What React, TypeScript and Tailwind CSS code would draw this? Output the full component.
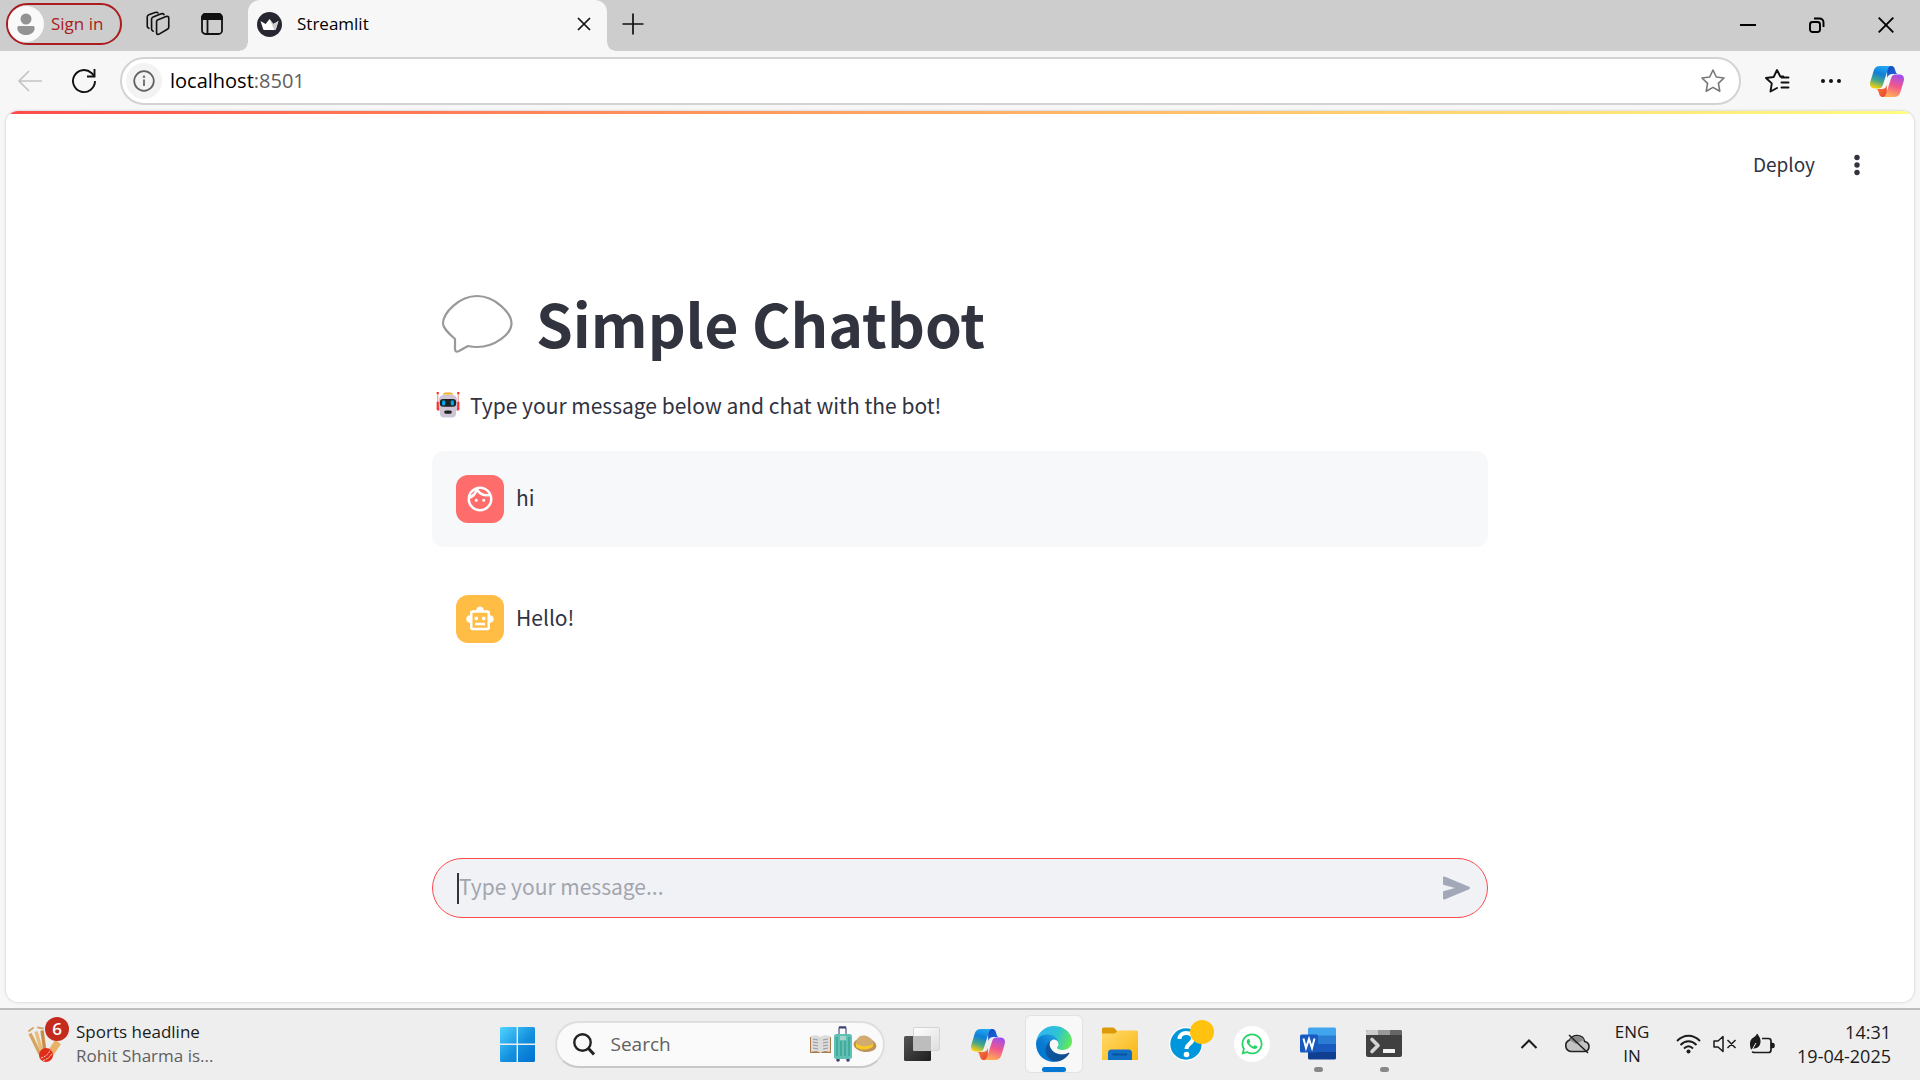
import { useId, type ReactNode } from "react";
import { FaWhatsapp } from "react-icons/fa";
import { MdOutlineFace, MdOutlineSmartToy } from "react-icons/md";

const ui = "font-['Open_Sans',sans-serif]";
const app = "font-['Noto_Sans_CJK_SC','Noto_Sans',sans-serif]";

function CopilotLogo() {
  const id = useId();
  return (
    <svg width="34" height="31" viewBox="0 0 34 31" aria-hidden="true">
      <defs>
        <linearGradient id={id + "a"} x1="0.6" y1="0" x2="0.3" y2="1">
          <stop offset="0" stopColor="#22a7f2" />
          <stop offset="0.35" stopColor="#0f7fd8" />
          <stop offset="0.68" stopColor="#4aa883" />
          <stop offset="1" stopColor="#fdd10a" />
        </linearGradient>
        <linearGradient id={id + "b"} x1="0.7" y1="0" x2="0.4" y2="1">
          <stop offset="0" stopColor="#a04df0" />
          <stop offset="0.5" stopColor="#f0588c" />
          <stop offset="1" stopColor="#ffad55" />
        </linearGradient>
        <linearGradient id={id + "c"} x1="0" y1="0" x2="1" y2="1">
          <stop offset="0" stopColor="#1546c0" />
          <stop offset="1" stopColor="#1c73e0" />
        </linearGradient>
        <linearGradient id={id + "d"} x1="0" y1="0" x2="1" y2="1">
          <stop offset="0" stopColor="#fb8a2c" />
          <stop offset="1" stopColor="#e73f3c" />
        </linearGradient>
      </defs>
      <path d="M17 0h4.5c2 0 2.8 1.4 3.3 3l1 3c.5 1.4 1.3 2 2.7 2h-6c-3 0-4.300 1-5.300 4z" fill={`url(#${id}c)`} />
      <path d="M17 31h-4.500c-2 0-2.800-1.400-3.300-3l-1-3c-.5-1.400-1.300-2-2.700-2h6c3 0 4.300-1 5.300-4z" fill={`url(#${id}d)`} />
      <path d="M10 0h11c-2.300.3-3 2.500-3.600 4.700L13 18.500C12 21.500 11 22.500 8.500 22.500H4.500C.5 22.500-.7 19.500.4 15.500L3.600 5C4.600 1.800 6.500 0 10 0z" fill={`url(#${id}a)`} />
      <path d="M24 31H13c2.300-.3 3-2.500 3.600-4.700L21 12.500c1-3 2-4 4.500-4h4c4 0 5.200 3 4.100 7L30.400 26c-1 3.200-2.900 5-6.400 5z" fill={`url(#${id}b)`} />
    </svg>
  );
}

function EdgeLogo() {
  return (
    <svg width="36" height="36" viewBox="0 0 256 256" aria-hidden="true">
      <defs>
        <linearGradient id="edge-a" x1="60" y1="177" x2="241" y2="177" gradientUnits="userSpaceOnUse">
          <stop offset="0" stopColor="#0c59a4" />
          <stop offset="1" stopColor="#114a8b" />
        </linearGradient>
        <linearGradient id="edge-b" x1="158" y1="100" x2="46" y2="222" gradientUnits="userSpaceOnUse">
          <stop offset="0" stopColor="#1b9de2" />
          <stop offset="0.6" stopColor="#0a78d0" />
          <stop offset="1" stopColor="#0078d4" />
        </linearGradient>
        <linearGradient id="edge-c" x1="20" y1="40" x2="250" y2="130" gradientUnits="userSpaceOnUse">
          <stop offset="0" stopColor="#30b6ee" />
          <stop offset="0.5" stopColor="#2cc3d5" />
          <stop offset="1" stopColor="#66eb50" />
        </linearGradient>
      </defs>
      <path fill="url(#edge-a)" d="M231 190.500c-3.400 1.800-6.900 3.400-10.500 4.700a101.500 101.500 0 0 1-35.700 6.400c-47 0-88-32.300-88-73.900a31.500 31.500 0 0 1 16.400-27.300c-42.600 1.800-53.500 46.100-53.500 72 0 73.500 67.800 80.900 82.300 80.900 7.900 0 19.700-2.300 26.800-4.500l1.300-.4a128.300 128.300 0 0 0 66.600-52.800 4 4 0 0 0-5.700-5.100z" />
      <path fill="url(#edge-b)" d="M105.700 241.600a79.200 79.200 0 0 1-22.700-21.300 80.700 80.700 0 0 1 29.500-120c3.200-1.500 8.500-4.200 15.600-4a32.400 32.400 0 0 1 25.700 12.900 31.900 31.900 0 0 1 6.400 18.700c0-.2 24.500-79.600-80-79.600-43.900 0-80 41.700-80 78.300a130.200 130.200 0 0 0 12.100 56A128.200 128.200 0 0 0 169 249.200a75.400 75.400 0 0 1-62.800-7.600h-.5z" />
      <path fill="url(#edge-c)" d="M152.300 148.900c-.8 1-3.300 2.500-3.300 5.700 0 2.600 1.700 5.100 4.700 7.200 14.400 10 41.500 8.700 41.600 8.700 10.700 0 21.100-2.900 30.300-8.300A61.400 61.400 0 0 0 256 109.300c.3-22.400-8-37.300-11.300-43.900C223.500 23.900 177.700 0 128 0A128 128 0 0 0 0 126.200c.5-36.500 36.800-66 80-66 3.500 0 23.500.3 42 10a72.600 72.600 0 0 1 30.900 29.300c6.100 10.600 7.200 24.100 7.200 29.500s-2.700 13.300-7.800 19.900z" />
    </svg>
  );
}

function TabStrip() {
  return (
    <div className={`flex h-[51px] shrink-0 bg-[#cdcdcd] text-black ${ui}`}>
      <button className="mt-[3px] ml-1.5 flex h-[42px] w-[116px] items-center gap-[7px] rounded-full border-2 border-[#ab1c20] text-[17px] text-[#ab1c20]">
        <svg width="36" height="36" viewBox="0 0 36 36" aria-hidden="true">
          <circle cx="18" cy="18" r="18" fill="#f9f9f9" />
          <circle cx="18" cy="13" r="5.500" fill="#939393" />
          <path d="M11 20h14a1.700 1.700 0 0 1 1.700 1.700C26.700 26 23 29 18 29s-8.700-3-8.700-7.300A1.700 1.700 0 0 1 11 20z" fill="#939393" />
        </svg>
        Sign in
      </button>
      <button aria-label="Workspaces" className="ml-6 flex h-12 w-6 items-center">
        <svg width="25" height="26" viewBox="0 0 25 26" fill="none" stroke="#111" strokeWidth="1.700" strokeLinejoin="round" strokeLinecap="round">
          <path d="M11 10.500c0-1 .6-1.500 1.500-1.900l8.500-3.300c1.500-.6 2.700 0 2.700 1.500v9.500c0 1-.5 1.700-1.500 2.200l-8.500 5c-1.500.8-2.700.2-2.700-1.500z" />
          <path d="M7.500 20.500c-1-.3-1.700-1-1.700-2.200V8c0-1 .6-1.800 1.600-2.200l7.800-3.300c1.500-.6 3-.3 3.600.7" />
          <path d="M3 17.500c-1-.4-1.700-1-1.700-2.200V5.500c0-1 .6-1.800 1.600-2.200L9.500 1c1.300-.4 2.500-.2 3 .5" />
        </svg>
      </button>
      <button aria-label="Tab actions" className="ml-[30px] flex h-12 w-6 items-center">
        <svg width="24" height="24" viewBox="0 0 24 24" fill="none" stroke="#111" strokeWidth="1.800">
          <rect x="2" y="2" width="20" height="20" rx="3.500" />
          <path d="M2 7V5.500A3.500 3.500 0 0 1 5.500 2h13A3.500 3.500 0 0 1 22 5.500V7z" fill="#111" />
          <path d="M7.500 8v14" />
        </svg>
      </button>
      <div className="ml-4 h-2 w-2 self-end bg-[radial-gradient(circle_at_0_0,#cdcdcd_7px,#f7f7f7_8px)]" />
      <div className="flex h-full w-[359px] items-center rounded-t-[12px] bg-[#f7f7f7] pr-4 pb-[3px] pl-[9px]">
        <svg width="25" height="25" viewBox="0 0 25 25" aria-hidden="true">
          <circle cx="12.500" cy="12.500" r="12.500" fill="#262730" />
          <path d="M3.500 9l5.200 3 3.800-5 3.800 5 5.200-3-2.500 7.700c-.3 1-.8 1.300-1.800 1.300H7.800c-1 0-1.500-.3-1.800-1.300z" fill="#fff" />
          <path d="M12.500 7l3.800 5 5.200-3-2.500 7.700c-.3 1-.8 1.300-1.800 1.300z" fill="#ccc" />
        </svg>
        <span className="ml-[15px] flex-1 text-[17px]">Streamlit</span>
        <button aria-label="Close tab">
          <svg width="14" height="14" viewBox="0 0 14 14" stroke="#111" strokeWidth="1.700">
            <path d="M1 1l12 12M13 1L1 13" />
          </svg>
        </button>
      </div>
      <div className="h-2 w-2 self-end bg-[radial-gradient(circle_at_100%_0,#cdcdcd_7px,#f7f7f7_8px)]" />
      <button aria-label="New tab" className="mb-1 ml-[7px]">
        <svg width="22" height="22" viewBox="0 0 22 22" stroke="#111" strokeWidth="1.700">
          <path d="M11 0.500v21M0.500 11h21" />
        </svg>
      </button>
      <div className="ml-auto flex items-center gap-[53px] pr-[26px] pb-px">
        <button aria-label="Minimize">
          <svg width="16" height="16" viewBox="0 0 16 16" stroke="#000" strokeWidth="2"><path d="M0 8h16" /></svg>
        </button>
        <button aria-label="Restore">
          <svg width="16" height="16" viewBox="0 0 16 16" fill="none" stroke="#000" strokeWidth="1.900">
            <rect x="1" y="5" width="10" height="10" rx="2.500" />
            <path d="M5 1.500h5.500c2.500 0 4 1.800 4 4V10" />
          </svg>
        </button>
        <button aria-label="Close window">
          <svg width="16" height="16" viewBox="0 0 16 16" stroke="#000" strokeWidth="1.900"><path d="M.7.7l14.600 14.600M15.300.7L.7 15.300" /></svg>
        </button>
      </div>
    </div>
  );
}

function Toolbar() {
  return (
    <div className={`flex h-[60px] shrink-0 items-center bg-[#f7f7f7] pr-4 pl-[17px] ${ui}`}>
      <button aria-label="Back" disabled>
        <svg width="26" height="24" viewBox="0 0 26 24" fill="none" stroke="#c4c4c4" strokeWidth="1.700"><path d="M25 12H2M12 2L2 12l10 10" /></svg>
      </button>
      <button aria-label="Refresh" className="ml-7">
        <svg width="26" height="26" viewBox="0 0 26 26" fill="none" stroke="#111" strokeWidth="1.900">
          <path d="M24 13A11 11 0 1 1 20.500 5L23.500 8" />
          <path d="M23.500 1v7.500H16" />
        </svg>
      </button>
      <div className="ml-[23px] flex h-12 flex-1 items-center rounded-full border-2 border-[#d3d3d3] bg-white pr-[13px] pl-1">
        <button aria-label="Site information" className="flex h-9 w-9 items-center justify-center rounded-full bg-[#f3f3f3]">
          <svg width="22" height="22" viewBox="0 0 22 22" fill="none" stroke="#606060" strokeWidth="1.700">
            <circle cx="11" cy="11" r="9.800" />
            <path d="M11 9.500V16" />
            <circle cx="11" cy="6.700" r=".4" />
          </svg>
        </button>
        <div className="ml-2 flex-1 text-[20px] text-black">
          localhost<span className="text-[#606060]">:8501</span>
        </div>
        <button aria-label="Add to favorites">
          <svg width="26" height="26" viewBox="0 0 26 26" fill="none" stroke="#777" strokeWidth="1.600" strokeLinejoin="round">
            <path d="M13 2l3.300 7 7.700 1-5.600 5.400 1.400 7.800L13 19.400l-6.800 3.800 1.400-7.800L2 10l7.700-1z" />
          </svg>
        </button>
      </div>
      <button aria-label="Favorites" className="ml-[23px]">
        <svg width="26" height="26" viewBox="0 0 26 26" fill="none" stroke="#111" strokeWidth="1.900" strokeLinejoin="round" strokeLinecap="round">
          <path d="M13 20l-6.500 3.500 1.300-8.100L2 10l7.700-1L13 2l3.300 6.500h3" />
          <path d="M17.500 9.500h7M17.500 14.500h7M17.500 19.500h7" />
        </svg>
      </button>
      <button aria-label="Settings and more" className="ml-[30px]">
        <svg width="22" height="6" viewBox="0 0 22 6" fill="#111"><circle cx="3" cy="3" r="2" /><circle cx="11" cy="3" r="2" /><circle cx="19" cy="3" r="2" /></svg>
      </button>
      <button aria-label="Copilot" className="ml-7"><CopilotLogo /></button>
    </div>
  );
}

function RobotEmoji() {
  return (
    <svg width="24" height="26" viewBox="2 1 22 24" aria-hidden="true">
      <path d="M3.500 3v10M22.500 3v10" stroke="#f8a0a0" strokeWidth="1.200" />
      <path d="M2.500 1h2v2h-2zM21.500 1h2v2h-2zM2.500 10h2.500v8H3.500a1 1 0 0 1-1-1zM21 10h2.500v7a1 1 0 0 1-1 1H21z" fill="#f8312f" />
      <path d="M10.500 1.500h5c1.200 0 2 .8 2 2H8.500c0-1.200.8-2 2-2z" fill="#ffb02e" />
      <path d="M4.500 9c0-3.500 2-5.500 5.500-5.500h6c3.500 0 5.500 2 5.500 5.500v6c0 1.500-.5 2.500-1 3.500v2c0 2.500-1.500 4-4 4h-7c-2.500 0-4-1.500-4-4v-2c-.5-1-1-2-1-3.500z" fill="#cdc4d6" />
      <rect x="5.500" y="7.500" width="15" height="7" rx="3" fill="#212121" />
      <rect x="7.500" y="8.500" width="3" height="5" rx="1.500" fill="#00a6ed" />
      <rect x="15.500" y="8.500" width="3" height="5" rx="1.500" fill="#00a6ed" />
      <rect x="9.500" y="18" width="7" height="3" rx="1.500" fill="#212121" />
    </svg>
  );
}

function Message({ shaded, color, icon, children }: { shaded?: boolean; color: string; icon: ReactNode; children: ReactNode }) {
  return (
    <article className={`flex items-center gap-3 rounded-[12px] p-6 ${shaded ? "bg-[#f7f8fa]" : ""}`}>
      <div className={`flex h-12 w-12 shrink-0 items-center justify-center rounded-[12px] text-white ${color}`}>{icon}</div>
      <p className="pb-1 text-[21px] leading-9">{children}</p>
    </article>
  );
}

function ChatPage() {
  return (
    <div className="flex flex-1 flex-col bg-[#f7f7f7] px-1.5 pb-1.5">
      <main className={`flex flex-1 flex-col overflow-hidden rounded-[12px] bg-white text-[#31333f] shadow-[0_0_2px_1px_#dddddd] ${app}`}>
        <div className="h-[3px] shrink-0 bg-linear-to-r from-[#ff4b4b] to-[#fffd80]" />
        <header className="flex h-[102px] shrink-0 items-center justify-end gap-[31px] pr-[46px]">
          <button className="pb-0.5 text-[19px]">Deploy</button>
          <button aria-label="Main menu">
            <svg width="22" height="22" viewBox="0 0 22 22" fill="#31333f"><circle cx="11" cy="3.500" r="2.700" /><circle cx="11" cy="11" r="2.700" /><circle cx="11" cy="18.500" r="2.700" /></svg>
          </button>
        </header>
        <div className="mx-auto flex w-full max-w-[1056px] flex-1 flex-col pt-[67px] pb-[84px]">
          <h1 className="flex items-center gap-[23px] pl-[9px] text-[59px] leading-[80px] font-bold">
            <svg width="72" height="60" viewBox="0 0 72 60" fill="none" stroke="#999" strokeWidth="2.200" strokeLinejoin="round" aria-hidden="true">
              <path d="M36 3C54 3 70.500 20 70.500 30.500S54 54 36 54q-5 0-9-1l-9 5c-3 1.300-4 .3-4-2V46C8 41 2 34 2 30.500 2 20 18 3 36 3z" />
            </svg>
            Simple Chatbot
          </h1>
          <p className="mt-6 flex items-center gap-[10px] pl-1 text-[21px] leading-9">
            <RobotEmoji />
            Type your message below and chat with the bot!
          </p>
          <section aria-label="Conversation" className="mt-7 flex flex-col gap-6">
            <Message shaded color="bg-[#ff6c6c]" icon={<MdOutlineFace size={30} />}>hi</Message>
            <Message color="bg-[#ffbd45]" icon={<MdOutlineSmartToy size={30} />}>Hello!</Message>
          </section>
          <form className="mt-auto flex h-[60px] items-center rounded-full border border-[#ff4b4b] bg-[#f0f2f6] pr-4 pl-6" onSubmit={(e) => e.preventDefault()}>
            <span className="h-[31px] w-[2px] bg-[#31333f]" />
            <input aria-label="Type your message" placeholder="Type your message..." className="h-10 flex-1 bg-transparent pb-1 text-[21px] leading-9 outline-none placeholder:text-[#a3a5ae]" />
            <button aria-label="Send message">
              <svg width="28" height="24" viewBox="0 0 28 24" fill="#a3a8b8"><path d="M0 1.700C0 .8.700.3 1.600.6l24.500 10.200c1.200.5 1.200 1.900 0 2.400L1.600 23.400c-.9.300-1.600-.2-1.600-1.100v-5.800c0-.8.300-1.200 1-1.400L12 12 1 9C.3 8.700 0 8.300 0 7.500z" /></svg>
            </button>
          </form>
        </div>
      </main>
    </div>
  );
}

function TaskButton({ label, active, running, children }: { label: string; active?: boolean; running?: boolean; children: ReactNode }) {
  return (
    <button
      aria-label={label}
      className={`relative mx-1 flex h-[58px] w-[58px] items-center justify-center rounded-[6px] border ${active ? "border-[#e2e2e2] bg-[#f8f8f8]" : "border-transparent"}`}
    >
      {children}
      {active && <span className="absolute bottom-0 left-4 h-[5px] w-6 rounded-full bg-[#0078d4]" />}
      {running && <span className="absolute bottom-0 left-6 h-[5px] w-[9px] rounded-full bg-[#888]" />}
    </button>
  );
}

function WindowsLogo() {
  return (
    <svg width="35" height="35" viewBox="0 0 35 35" aria-hidden="true">
      <defs>
        <linearGradient id="win" x1="0" y1="0" x2="35" y2="35" gradientUnits="userSpaceOnUse">
          <stop offset="0" stopColor="#4fd4ff" />
          <stop offset="0.55" stopColor="#1490df" />
          <stop offset="1" stopColor="#0070cf" />
        </linearGradient>
      </defs>
      <path d="M1.500 0H16.600V16.600H0V1.500A1.500 1.500 0 0 1 1.500 0zM18 0h15.500A1.500 1.500 0 0 1 35 1.500v15.100H18zM0 18h16.600v17H1.500A1.500 1.500 0 0 1 0 33.500zM18 18h17v15.500a1.500 1.500 0 0 1-1.500 1.500H18z" fill="url(#win)" />
    </svg>
  );
}

function CricketIcon() {
  return (
    <svg width="36" height="38" viewBox="0 0 36 38" aria-hidden="true">
      <path d="M1 6l4-3M10 2.500l5 1" stroke="#d4a869" strokeWidth="2" strokeLinecap="round" />
      <path d="M2 8.500L12 29" stroke="#d9a45e" strokeWidth="3.400" />
      <path d="M8 6.500L14 27" stroke="#e9bc7c" strokeWidth="3.400" />
      <path d="M14 5.500L17 27" stroke="#c98d48" strokeWidth="3.400" />
      <path d="M30 17L20 32" stroke="#e7b267" strokeWidth="7" />
      <circle cx="18" cy="30" r="7" fill="#e02d1b" />
      <path d="M13 33c4-1 8-4 9-8M15 35.500c4-1 8-4 9-7.500" stroke="#ffd9cc" strokeWidth="1" fill="none" strokeDasharray="2 1" />
    </svg>
  );
}

function SearchArt() {
  return (
    <svg width="68" height="36" viewBox="0 0 68 36" aria-hidden="true">
      <path d="M1 11h21v16H1z" fill="#a9794c" />
      <path d="M2 10c4-1.500 7-1 9.500 1v16C9 25 6 25 2 26zM21 10c-4-1.500-7-1-9.500 1v16c2.500-2 5.500-2 9.500-1z" fill="#dcdcdc" />
      <path d="M4 13l5 1M4 16l5 1M4 19l5 1M4 22l5 1M14 14l5-1M14 17l5-1M14 20l5-1M14 23l5-1" stroke="#999" strokeWidth="1.200" />
      <path d="M30 9V2.500c0-1 .5-1.500 1.500-1.500h4c1 0 1.500.5 1.500 1.500V9" fill="none" stroke="#7a7fa0" strokeWidth="1.600" />
      <path d="M30 1.500h7" stroke="#3d3f75" strokeWidth="2" />
      <circle cx="29" cy="34" r="1.800" fill="#3d3f75" /><circle cx="39" cy="34" r="1.800" fill="#3d3f75" />
      <rect x="25" y="8" width="18" height="25" rx="2.500" fill="#5fc0b4" />
      <path d="M28 11v19M32 15v15M36 15v15M40 11v19" stroke="#389a90" strokeWidth="1.200" />
      <rect x="31" y="10" width="6" height="4" fill="#a8d3ca" />
      <ellipse cx="56" cy="19" rx="11.500" ry="7" fill="#be9258" transform="rotate(6 56 19)" />
      <path d="M47 18c0-6 4-9 8-8.500 2 0 3 .5 4.500 1.500 3 1.500 5 4 5 7-2 5-14 5-17.500 0z" fill="#d2ab70" />
      <path d="M47 17c4 4 12 4 17 1v2.500c-4 4-13 4-17 .5z" fill="#f8ca28" />
    </svg>
  );
}

function Taskbar() {
  return (
    <footer className={`flex h-[72px] shrink-0 items-center border-t-2 border-[#bdbdbd] bg-[#eeeeee] pb-0.5 leading-6 text-[#1b1b1b] ${ui}`}>
      <div className="flex flex-1 basis-0 items-center pl-7">
        <button className="flex items-center text-left text-[17px]">
          <span className="relative mr-3 flex">
            <CricketIcon />
            <span className="absolute -top-2 left-[17px] flex h-6 w-6 items-center justify-center rounded-full bg-[#c42b1c] text-[17px] font-semibold text-white">6</span>
          </span>
          <span className="flex flex-col">
            <span>Sports headline</span>
            <span className="text-[#606060]">Rohit Sharma is...</span>
          </span>
        </button>
      </div>
      <nav aria-label="Taskbar" className="flex items-center pr-[18px]">
        <TaskButton label="Start"><WindowsLogo /></TaskButton>
        <div className="mr-1 ml-1 flex h-[47px] w-[330px] items-center rounded-full border-2 border-[#dedede] border-b-[#c8c8c8] bg-[#fafafa] pr-[6px] pl-4">
          <svg width="22" height="23" viewBox="0 0 22 23" fill="none" stroke="#222" strokeWidth="2.400" aria-hidden="true">
            <circle cx="9.500" cy="9.500" r="8.200" /><path d="M15.500 15.500l5.500 6" strokeWidth="3" />
          </svg>
          <input aria-label="Search" placeholder="Search" className="ml-4 min-w-0 flex-1 bg-transparent text-[19px] outline-none placeholder:text-[#606060]" />
          <SearchArt />
        </div>
        <TaskButton label="Task view">
          <svg width="36" height="36" viewBox="0 0 36 36">
            <defs>
              <linearGradient id="tv" x1="0" y1="0" x2="1" y2="1"><stop offset="0" stopColor="#555" /><stop offset="1" stopColor="#1d1d1d" /></linearGradient>
              <linearGradient id="tw" x1="0" y1="0" x2="1" y2="1"><stop offset="0" stopColor="#fff" /><stop offset="1" stopColor="#dedede" /></linearGradient>
            </defs>
            <rect x="0" y="10" width="27" height="25" rx="1.500" fill="url(#tv)" />
            <rect x="9.500" y="1.500" width="26" height="23" rx="1.500" fill="url(#tw)" stroke="#d4d4d4" />
            <path d="M9 10h18v15H10.500A1.500 1.500 0 0 1 9 23.500z" fill="#bdbdbd" />
          </svg>
        </TaskButton>
        <TaskButton label="Copilot"><CopilotLogo /></TaskButton>
        <TaskButton label="Microsoft Edge" active><EdgeLogo /></TaskButton>
        <TaskButton label="File Explorer">
          <svg width="36" height="34" viewBox="0 0 36 34">
            <defs><linearGradient id="fe" x1="0" y1="0" x2="1" y2="1"><stop offset="0" stopColor="#ffda6b" /><stop offset="1" stopColor="#f9b612" /></linearGradient></defs>
            <path d="M0 2a1.500 1.500 0 0 1 1.500-1.500h9c1 0 1.500.3 2.200 1L15 4H34v4H0z" fill="#dc9a0a" />
            <path d="M0 6.500h11.500c1.500 0 2-.5 3-1.500s1.500-1.500 3-1.500H34.500A1.500 1.500 0 0 1 36 5v28H0z" fill="url(#fe)" />
            <path d="M6 33v-7a3.500 3.500 0 0 1 3.500-3.500h17A3.500 3.500 0 0 1 30 26v7z" fill="#116fc5" />
            <path d="M10.500 27.500h14.500" stroke="#07509a" strokeWidth="1.800" />
          </svg>
        </TaskButton>
        <TaskButton label="Get Help">
          <svg width="34" height="34" viewBox="0 0 34 34">
            <circle cx="17" cy="17" r="17" fill="#fff" /><circle cx="17" cy="17" r="15.700" fill="#0096db" />
            <path d="M10.500 12c0-4 2.800-6 6.700-6s6.800 2 6.800 5.500c0 5-6.500 5-6.500 10.500" fill="none" stroke="#fff" strokeWidth="4" />
            <circle cx="17.500" cy="27.500" r="2.800" fill="#fff" />
          </svg>
          <span className="absolute top-1 right-0 h-6 w-6 rounded-full bg-[#ffc20e]" />
        </TaskButton>
        <TaskButton label="WhatsApp">
          <span className="flex h-9 w-9 items-center justify-center rounded-full bg-white text-[#25d366]"><FaWhatsapp size={24} /></span>
        </TaskButton>
        <TaskButton label="Word" running>
          <svg width="36" height="34" viewBox="0 0 36 34">
            <path d="M8 2a1.500 1.500 0 0 1 1.500-1.500h25A1.500 1.500 0 0 1 36 2v7H8z" fill="#41a5ee" />
            <path d="M8 8.500h28V17H8z" fill="#2b7cd3" /><path d="M8 17h28v8H8z" fill="#185abd" />
            <path d="M8 25h28v6a1.500 1.500 0 0 1-1.500 1.500h-25A1.500 1.500 0 0 1 8 31z" fill="#103f91" />
            <rect x="0" y="7.500" width="18" height="18" rx="1.500" fill="#185abd" />
            <path d="M3.500 11.500l2.500 9.500L9 12l3 9 2.500-9.500" fill="none" stroke="#fff" strokeWidth="2" />
          </svg>
        </TaskButton>
        <TaskButton label="Terminal" running>
          <svg width="36" height="28" viewBox="0 0 36 28">
            <rect width="36" height="27" rx="2" fill="#404040" />
            <path d="M0 5V2a2 2 0 0 1 2-2h10v5z" fill="#ccc" /><path d="M12 0h12v5H12z" fill="#999" /><path d="M24 0h10a2 2 0 0 1 2 2v3H24z" fill="#666" />
            <path d="M6 9.500l6 6-6 6" fill="none" stroke="#d5d5d5" strokeWidth="3.600" strokeLinecap="round" strokeLinejoin="round" />
            <rect x="17" y="19" width="12" height="4" rx="0.500" fill="#f3f3f3" />
          </svg>
        </TaskButton>
      </nav>
      <div className="flex flex-1 basis-0 items-center justify-end pr-[29px]">
        <button aria-label="Show hidden icons">
          <svg width="18" height="10" viewBox="0 0 18 10" fill="none" stroke="#1b1b1b" strokeWidth="2"><path d="M1.500 9L9 1.500 16.500 9" /></svg>
        </button>
        <button aria-label="OneDrive" className="ml-[26px]">
          <svg width="26" height="20" viewBox="0 0 26 20" fill="none" stroke="#222" strokeWidth="1.600">
            <path d="M7 17.500A6 6 0 0 1 5.500 6C7 3.500 9.500 1.500 13 1.500c4 0 7 2.500 7.700 6 2.500.5 4.300 2.500 4.300 5 0 3-2 5-5 5z" fill="#c4c4c4" />
            <path d="M5.500 6C8 2 16 0 20 6l-8 4z" fill="#8a8a8a" stroke="none" />
            <path d="M5 1l19 18" />
          </svg>
        </button>
        <button className="ml-6 w-9 text-center text-[17px]">ENG IN</button>
        <button aria-label="Network, volume and battery" className="ml-[26px] flex items-center gap-3">
          <svg width="25" height="20" viewBox="0 0 25 20" fill="none" stroke="#1b1b1b" strokeWidth="1.900">
            <path d="M1 7C8 0 17 0 24 7M4.500 11c5-5 11-5 16 0M8 14.500c3-3 6-3 9 0" /><circle cx="12.500" cy="17.500" r="2" fill="#1b1b1b" stroke="none" />
          </svg>
          <svg width="24" height="18" viewBox="0 0 24 18" fill="none" stroke="#1b1b1b" strokeWidth="1.500" strokeLinejoin="round">
            <path d="M1 6h4l5-4.500v15L5 12H1zM14.500 5l8 8M22.500 5l-8 8" />
          </svg>
          <svg width="26" height="22" viewBox="0 0 26 22" fill="none" stroke="#1b1b1b" strokeWidth="1.700">
            <path d="M13 5.500h6.500A2.500 2.500 0 0 1 22 8v9a2.500 2.500 0 0 1-2.500 2.500H5a2 2 0 0 1-1.700-1" />
            <path d="M22.500 10.500h1.200c.7 0 1.200.5 1.200 1.200v1.600c0 .7-.5 1.200-1.200 1.200h-1.200z" fill="#1b1b1b" />
            <path d="M8 .5c3 3.500 4.500 7 3 11-1 2.500-3.500 4-6 4l-3 1C1 13.500 0 8.500 3 5.500c2-1.500 4-2 5-5z" fill="#1b1b1b" stroke="none" />
            <path d="M3 17l4-7" stroke="#eee" strokeWidth="1" />
          </svg>
        </button>
        <button className="ml-[22px] text-right text-[18px]">14:31<br />19-04-2025</button>
      </div>
    </footer>
  );
}

export default function App() {
  return (
    <div className="flex min-h-screen flex-col">
      <TabStrip />
      <Toolbar />
      <ChatPage />
      <Taskbar />
    </div>
  );
}
